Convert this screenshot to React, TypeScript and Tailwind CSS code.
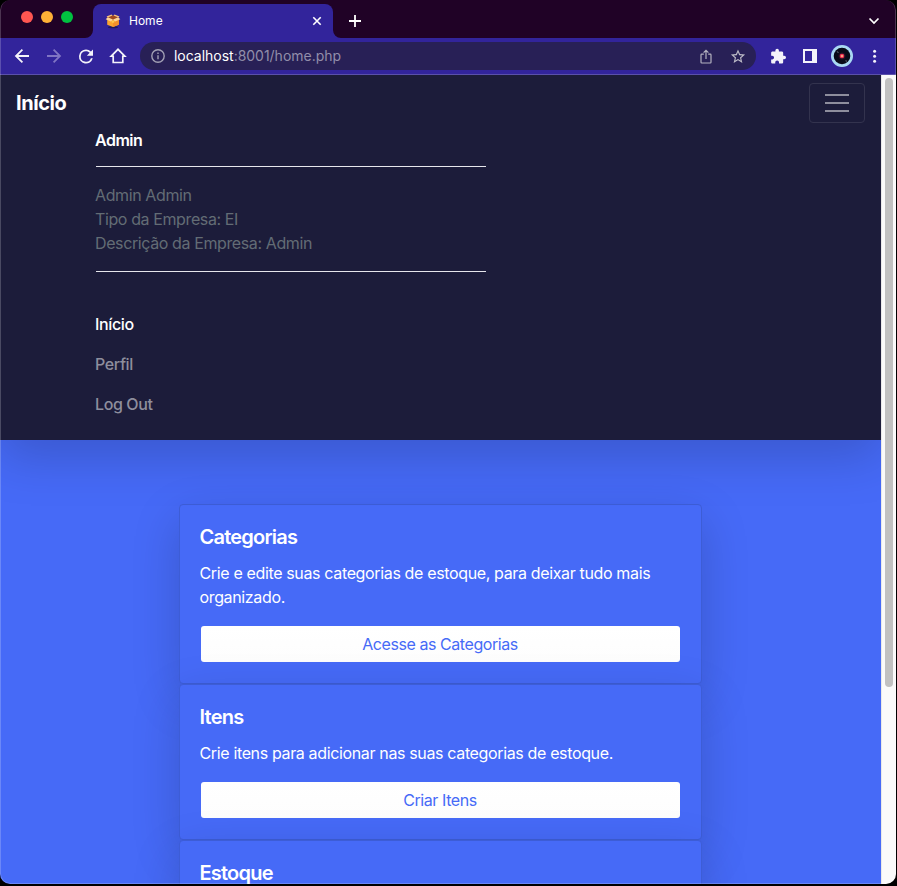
import React from "react";

type CardProps = { title: string; text?: React.ReactNode; action?: string };

function TabCurve() {
  return (
    <svg className="block" width="8" height="8" viewBox="0 0 8 8" fill="#32249b">
      <path d="M8 0v8H0a8 8 0 0 0 8-8z" />
    </svg>
  );
}

function TabStrip() {
  return (
    <div className="flex h-[38px] items-end bg-[#200226]">
      <div className="flex h-[38px] w-[85px] items-center gap-2 pl-[21px] pb-[4px]">
        <span className="size-3 rounded-full bg-[#ff5651]" />
        <span className="size-3 rounded-full bg-[#ffb136]" />
        <span className="size-3 rounded-full bg-[#00c140]" />
      </div>
      <TabCurve />
      <div className="flex h-[34px] w-[240px] items-center rounded-t-[8px] bg-[#32249b] pl-[12px] pr-[11px]">
        <svg width="16" height="16" viewBox="0 0 16 16">
          <ellipse cx="8" cy="14.3" rx="5" ry="1" fill="#201a55" />
          <path d="M2.2 5.500 8 7.200l5.800-1.700v6.200L8 14l-5.800-2.300z" fill="#fba52f" />
          <path d="M8 7.200l5.800-1.700v6.200L8 14z" fill="#f4912a" />
          <path d="M2.500 4.400 8 2.200l5.500 2.200L8 7z" fill="#a34a1b" />
          <path d="M2.800 4.200.7 6.200l5.200 2.300L8 6.600zM13.200 4.200l2.100 2-5.200 2.300L8 6.600z" fill="#ffd595" />
          <path d="M1.500 3.500 6.500 1.600 7.500 2.400 2.800 4.500zM14.500 3.500 9.500 1.600 8.500 2.400l4.700 2.100z" fill="#fdc477" />
          <path d="M6.800 8.200 8 7.100l1.200 1.100v1.600H6.800z" fill="#ffc94c" />
        </svg>
        <span className="ml-2 flex-1 text-[12px] leading-4 text-white">Home</span>
        <svg width="10" height="10" viewBox="0 0 10 10" fill="none" stroke="#fff" strokeWidth="1.6">
          <path d="M1.300 1.300l7.400 7.400M8.700 1.300 1.300 8.700" />
        </svg>
      </div>
      <div className="-scale-x-100"><TabCurve /></div>
      <svg className="mb-[11px] ml-[8px]" width="12" height="12" viewBox="0 0 12 12" fill="none" stroke="#fff" strokeWidth="1.8">
        <path d="M6 0v12M0 6h12" />
      </svg>
      <svg className="mb-[13px] ml-auto mr-[16px]" width="12" height="8" viewBox="0 0 12 8" fill="none" stroke="#fff" strokeWidth="1.7">
        <path d="M1.500 1.500 6 6l4.500-4.500" />
      </svg>
    </div>
  );
}

function Toolbar() {
  return (
    <div className="flex h-[37px] items-center border-b border-[#5a50ab] bg-[#32249b] pl-[14px] pr-[15px]">
      <svg width="16" height="16" viewBox="0 0 16 16" fill="none" stroke="#f4f3fa" strokeWidth="1.800">
        <path d="M15 8H2.300M8.400 1.600 2 8l6.400 6.400" />
      </svg>
      <svg className="ml-4" width="16" height="16" viewBox="0 0 16 16" fill="none" stroke="#8075c4" strokeWidth="1.800">
        <path d="M1 8h12.700M7.600 1.600 14 8l-6.400 6.400" />
      </svg>
      <svg className="ml-[13px]" width="22" height="21" viewBox="-0.500 0 25 24" fill="#f4f3fa">
        <path d="M17.650 6.350A7.960 7.960 0 0 0 12 4a8 8 0 1 0 7.730 10h-2.080A6 6 0 1 1 12 6c1.660 0 3.140.690 4.220 1.780L13 11h7V4z" />
      </svg>
      <svg className="ml-[12px]" width="18" height="18" viewBox="0 0 18 18" fill="none" stroke="#f4f3fa" strokeWidth="1.700">
        <path d="M4.500 9.200H2.200L9 2.300l6.800 6.900h-2.300M4.200 8.400v7.100h9.600V8.400" />
      </svg>
      <div className="ml-[13px] flex h-7 w-[616px] items-center rounded-full bg-[#282056] pl-[11px] pr-[10px]">
        <svg width="14" height="14" viewBox="0 0 14 14" fill="none" stroke="#a2a0b4" strokeWidth="1.400">
          <circle cx="7" cy="7" r="6.200" />
          <path d="M7 6.200v4M7 3.500V5" />
        </svg>
        <span className="ml-[9px] flex-1 text-[14px] leading-5 tracking-[-0.020px] text-[#928eaa]">
          <span className="text-white">localhost</span>:8001/home.php
        </span>
        <svg width="12" height="15" viewBox="0 0 12 15" fill="none" stroke="#b4b2c0" strokeWidth="1.200">
          <path d="M3.800 5.200H1.700q-.7 0-.7.700v7.400q0 .700.700.700h8.600q.7 0 .7-.700V5.900q0-.700-.7-.700H8.200M6 10V1.500M3.600 3.700 6 1.300l2.400 2.400" />
        </svg>
        <svg className="ml-[17px]" width="17" height="17" viewBox="-0.700 0 24 24" fill="#bdbbc7">
          <path d="M22 9.240l-7.190-.620L12 2 9.190 8.630 2 9.240l5.460 4.730L5.820 21 12 17.270 18.180 21l-1.630-7.030L22 9.240zM12 15.400l-3.760 2.270 1-4.280-3.320-2.880 4.380-.380L12 6.100l1.710 4.040 4.380.380-3.320 2.880 1 4.280L12 15.400z" />
        </svg>
      </div>
      <svg className="ml-[13px]" width="18" height="17" viewBox="-1 0 25.400 24" fill="#f4f3fa">
        <path d="M20.500 11H19V7c0-1.100-.9-2-2-2h-4V3.500a2.500 2.500 0 0 0-5 0V5H4c-1.100 0-1.990.9-1.990 2v3.800H3.500c1.490 0 2.700 1.210 2.700 2.700s-1.210 2.700-2.700 2.700H2V20c0 1.100.9 2 2 2h3.800v-1.500c0-1.490 1.210-2.700 2.700-2.700s2.700 1.210 2.700 2.700V22H17c1.100 0 2-.9 2-2v-4h1.500a2.500 2.500 0 0 0 0-5z" />
      </svg>
      <svg className="ml-[16px]" width="14" height="14" viewBox="0 0 14 14" fill="none" stroke="#f4f3fa">
        <rect x="1" y="1" width="12" height="12" strokeWidth="2" />
        <path d="M11.500 0v14" strokeWidth="5" />
      </svg>
      <svg className="ml-[14px]" width="22" height="22" viewBox="0 0 22 22">
        <circle cx="11" cy="11" r="11" fill="#a9d9f3" />
        <circle cx="11" cy="11" r="8.300" fill="#080b18" />
        <path d="M6 6.300l1.500 1.500M14.500 15.500l1.500 1" stroke="#525765" strokeWidth="1.200" />
        <circle cx="11" cy="11" r="3.500" fill="#281026" />
        <circle cx="11" cy="11" r="2.300" fill="#ef3654" />
        <circle cx="11" cy="11" r="1" fill="#ffc28a" />
      </svg>
      <svg className="ml-auto mr-[4px]" width="4" height="14" viewBox="0 0 4 14" fill="#f4f3fa">
        <circle cx="1.600" cy="2.300" r="1.500" />
        <circle cx="1.600" cy="7.300" r="1.500" />
        <circle cx="1.600" cy="12.300" r="1.500" />
      </svg>
    </div>
  );
}

function Navbar() {
  return (
    <nav className="relative z-10 h-[365px] bg-[#1c1c3a] pt-2 pb-4 shadow-[0_16px_48px_rgba(0,0,0,0.175)]">
      <div className="flex h-10 items-center justify-between px-4">
        <span className="text-[20px] leading-[30px] font-bold tracking-[-0.450px] text-white">Início</span>
        <button className="flex h-10 w-14 flex-col items-center justify-center gap-[6px] rounded-[4px] border border-[#33334e]">
          <span className="h-[2px] w-6 bg-[#8e8e9d]" />
          <span className="h-[2px] w-6 bg-[#8e8e9d]" />
          <span className="h-[2px] w-6 bg-[#8e8e9d]" />
        </button>
      </div>
      <div className="ml-24 w-[390px] pt-[5px]">
        <h5 className="-ml-px text-[16px] leading-6 font-semibold tracking-[-0.500px] text-white">Admin</h5>
        <hr className="mt-[14px] border-[#e6e6ec]" />
        <p className="mt-4 -ml-px text-[16px] leading-6 tracking-[-0.390px] text-[#636c75]">
          Admin Admin<br />Tipo da Empresa: EI<br />Descrição da Empresa: Admin
        </p>
        <hr className="mt-4 border-[#e6e6ec]" />
        <ul className="mt-8 -ml-px text-[16px] leading-6 font-medium tracking-[-0.380px] text-[#8e8e9d]">
          <li className="py-2 text-white">Início</li>
          <li className="py-2">Perfil</li>
          <li className="py-2">Log Out</li>
        </ul>
      </div>
    </nav>
  );
}

function Card({ title, text, action }: CardProps) {
  return (
    <section className="rounded-[4px] border border-[#3d5dd6] bg-[#466af7] px-5 pt-5 pb-[21px] shadow-[0_16px_48px_rgba(0,0,0,0.175)]">
      <h5 className="-ml-[0.5px] text-[20px] leading-6 font-semibold tracking-[-0.780px] text-white">{title}</h5>
      {text && <p className="mt-3 -ml-[0.5px] whitespace-nowrap text-[16px] leading-6 tracking-[-0.355px] text-white">{text}</p>}
      {action && (
        <button className="mt-[17px] ml-px flex h-9 w-[479px] items-center justify-center rounded-[3px] bg-[linear-gradient(#fff,#fdfdfd)] pr-px text-[16px] leading-6 tracking-[-0.430px] text-[#466af7]">
          {action}
        </button>
      )}
    </section>
  );
}

export default function App() {
  return (
    <div className="h-[886px] w-[897px] overflow-hidden bg-black font-['Inter','Liberation_Sans',sans-serif]">
      <div className="relative flex h-[884px] w-[896px] flex-col overflow-hidden rounded-[10px]">
        <TabStrip />
        <Toolbar />
        <div className="flex min-h-0 flex-1">
          <main className="h-full w-[881px] overflow-hidden bg-[#466af7]">
            <Navbar />
            <div className="ml-[179px] w-[523px] pt-16">
              <Card title="Categorias" text={<>Crie e edite suas categorias de estoque, para deixar tudo mais<br />organizado.</>} action="Acesse as Categorias" />
              <Card title="Itens" text="Crie itens para adicionar nas suas categorias de estoque." action="Criar Itens" />
              <Card title="Estoque" />
            </div>
          </main>
          <aside className="flex w-[15px] justify-center border-l border-[#e8e8e8] bg-[#fafafa] pt-[3px]">
            <span className="h-[609px] w-2 rounded-full bg-[#c1c1c1]" />
          </aside>
        </div>
        <div className="pointer-events-none absolute inset-0 z-20 rounded-[10px] border border-t-0 border-white/20" />
      </div>
    </div>
  );
}
